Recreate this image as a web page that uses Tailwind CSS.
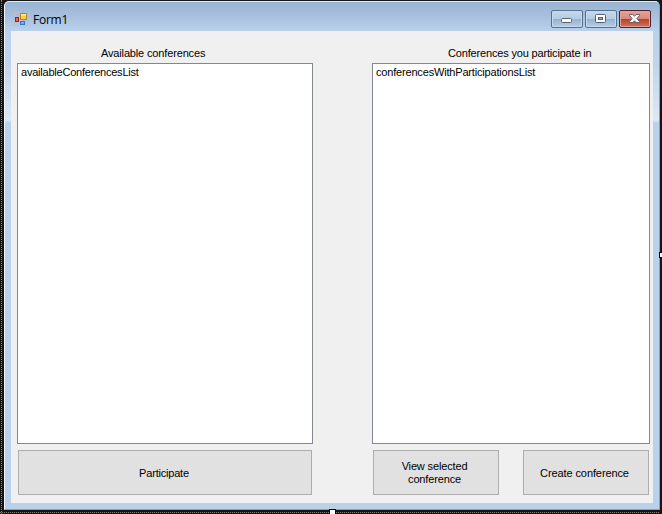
<!DOCTYPE html>
<html lang="en">
<head>
<meta charset="utf-8">
<title>Form1</title>
<script src="https://cdn.jsdelivr.net/npm/@tailwindcss/browser@4"></script>
</head>
<body class="relative h-[514px] w-[662px] overflow-hidden bg-[#151515] pt-px pl-1 font-['Liberation_Sans',Arial,sans-serif] text-[11px] leading-[13px] text-black">
<!-- dotted selection frame -->
<div class="absolute top-0 left-px h-full border-l border-dotted border-[#858585]"></div>
<div class="absolute top-[512px] left-0 w-[659px] border-t border-dotted border-[#858575]"></div>

<main class="relative flex h-[509px] w-[656px] flex-col rounded-t-[5px] border-t border-r border-b border-l border-t-[#e4edf7] border-r-[#35c4dc] border-b-[#35c4dc] border-l-[#f4f8fc] bg-[#b9d1ea] bg-[linear-gradient(to_bottom,#98b3d2_0px,#a7c0dd_14px,#b9d1ea_29px,#bed4ec_60px,#dce8f5_118px,#b9d1ea_121px,#b9d1ea_100%)] px-1.5 pb-1.5">
  <header class="flex h-[29px] shrink-0 items-start">
    <svg class="mt-[10px] ml-[3px] shrink-0" width="14" height="14" viewBox="0 0 14 14">
      <path d="M.5 .5H6M.5 .5V4M.5 10V13.500H5M11 13.500H13.500V8" fill="none" stroke="#bdbfc4"/>
      <rect x="6.500" y="1.500" width="6" height="6" fill="#f7cf45" stroke="#bd8510"/>
      <path d="M7 2H12V4H7Z" fill="#ffe58c"/>
      <rect x="1.500" y="5.500" width="3" height="4" fill="#e8655a" stroke="#a51d18"/>
      <rect x="6.500" y="9.500" width="4" height="3" fill="#78aaf4" stroke="#3d6ed0"/>
    </svg>
    <h1 class="mt-[10px] ml-[5px] text-[12px] leading-[15px] tracking-[-0.25px] font-['Open_Sans',sans-serif]">Form1</h1>
    <div class="mt-2 mr-0.5 ml-auto flex gap-0.5">
      <div class="flex h-[18px] w-8 items-center justify-center rounded-[2px] border border-[#58708f] bg-[linear-gradient(#c5d9ed_0%,#b4cce4_48%,#94b2d1_50%,#b3cee9_100%)] shadow-[inset_0_0_0_1px_#c7d9eb]">
        <svg class="mt-[3px] -ml-px" width="11" height="5" viewBox="0 0 11 5"><rect x=".5" y=".5" width="10" height="4" rx="1" fill="#fff" stroke="#595f70"/></svg>
      </div>
      <div class="flex h-[18px] w-8 items-center justify-center rounded-[2px] border border-[#58708f] bg-[linear-gradient(#c5d9ed_0%,#b4cce4_48%,#94b2d1_50%,#b3cee9_100%)] shadow-[inset_0_0_0_1px_#c7d9eb]">
        <svg class="-mt-px -ml-px" width="11" height="9" viewBox="0 0 11 9"><rect x=".5" y=".5" width="10" height="8" rx="1" fill="#fff" stroke="#595f70"/><rect x="3.500" y="3.500" width="4" height="2" fill="#9bb6d4" stroke="#595f70"/></svg>
      </div>
      <div class="flex h-[18px] w-8 items-center justify-center rounded-[2px] border border-[#551f2a] bg-[linear-gradient(#e4a498_0%,#d6897a_48%,#b9402a_50%,#d1705b_100%)] shadow-[inset_0_0_0_1px_#e0a499]">
        <svg class="-mt-px -ml-px" width="11" height="9" viewBox="0 0 11 9"><path d="M.5 .5H3.800L5.500 2.200 7.200 .5H10.500V1.500L7.800 4.500 10.500 7.500V8.500H7.200L5.500 6.800 3.800 8.500H.5V7.500L3.200 4.500 .5 1.500Z" fill="#f8f8f8" stroke="#5c5564" stroke-width=".9"/></svg>
      </div>
    </div>
  </header>

  <section class="grid min-h-0 flex-1 grid-cols-[296px_278px] content-start gap-x-[59px] bg-[#f0f0f0] pl-1.5">
    <div>
      <h2 class="h-8 pt-4 pl-[84px] tracking-[-0.15px] whitespace-nowrap">Available conferences</h2>
      <div class="h-[381px] border border-[#828790] bg-white pt-0.5 pl-[3px] tracking-[-0.22px] whitespace-nowrap">availableConferencesList</div>
      <button class="mt-1.5 ml-px block h-[45px] w-[294px] border border-[#adadad] bg-[#e1e1e1] pt-0.5 pr-0.5 tracking-[-0.2px]">Participate</button>
    </div>
    <div>
      <h2 class="h-8 pt-4 pl-[76px] tracking-[-0.17px] whitespace-nowrap">Conferences you participate in</h2>
      <div class="h-[381px] border border-[#828790] bg-white pt-0.5 pl-[3px] tracking-[-0.18px] whitespace-nowrap">conferencesWithParticipationsList</div>
      <div class="mt-1.5 ml-px flex gap-6">
        <button class="h-[45px] w-[126px] border border-[#adadad] bg-[#e1e1e1] pr-[3px] tracking-[-0.15px]">View selected<br>conference</button>
        <button class="h-[45px] w-[126px] border border-[#adadad] bg-[#e1e1e1] pt-0.5 pr-[3px] tracking-[-0.1px]">Create conference</button>
      </div>
    </div>
  </section>
</main>

<!-- resize grips -->
<div class="absolute top-[252px] left-[659px] h-1.5 w-[5px] border border-black bg-white"></div>
<div class="absolute top-[509px] left-[329px] h-1.5 w-[7px] border border-black bg-white"></div>
</body>
</html>
